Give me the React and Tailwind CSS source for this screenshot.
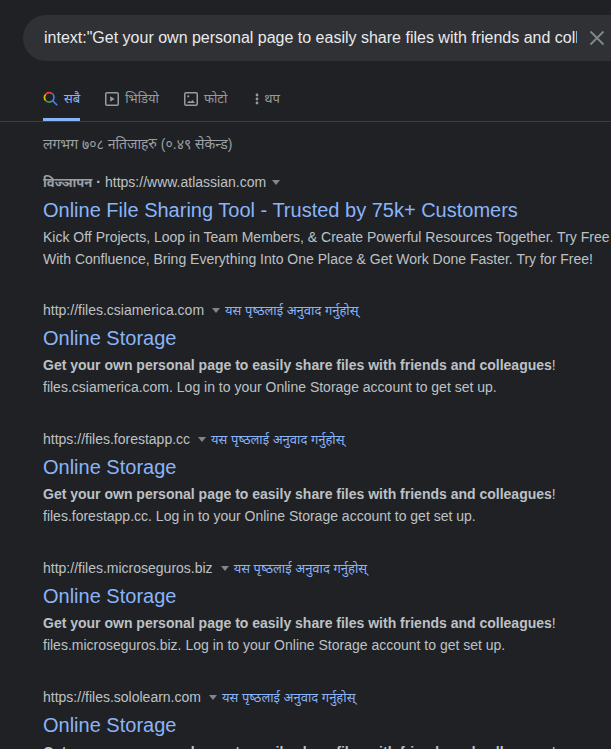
import React from "react";

const results = [
  { url: "http://files.csiamerica.com", host: "files.csiamerica.com" },
  { url: "https://files.forestapp.cc", host: "files.forestapp.cc" },
  { url: "http://files.microseguros.biz", host: "files.microseguros.biz" },
  { url: "https://files.sololearn.com", host: "files.sololearn.com" },
];

function SearchIcon() {
  return (
    <svg className="size-4" viewBox="0 0 16 16" fill="none" strokeWidth="1.6" aria-hidden="true">
      <path d="M2.6 3.4A4.8 4.8 0 0 1 9.7 3" stroke="#ea4335" />
      <path d="M2.6 3.4A4.8 4.8 0 0 0 2.6 9.4" stroke="#fbbc04" />
      <path d="M2.6 9.4A4.8 4.8 0 0 0 9.4 9.9" stroke="#34a853" />
      <path d="M9.7 3A4.8 4.8 0 0 1 9.4 9.9M9.4 9.5L14.2 14.3" stroke="#4285f4" />
    </svg>
  );
}

function VideoIcon() {
  return (
    <svg className="size-4" viewBox="0 0 16 16" fill="none" aria-hidden="true">
      <rect x="1.75" y="1.75" width="12.5" height="12.5" rx="1.2" stroke="#969ba1" strokeWidth="1.5" />
      <path d="M6.2 5.2L10.6 8L6.2 10.8Z" fill="#969ba1" />
    </svg>
  );
}

function PhotoIcon() {
  return (
    <svg className="size-4" viewBox="0 0 16 16" fill="none" aria-hidden="true">
      <rect x="1.75" y="1.75" width="12.5" height="12.5" rx="1.2" stroke="#969ba1" strokeWidth="1.5" />
      <circle cx="5.2" cy="5.3" r="1.1" fill="#969ba1" />
      <path d="M4 12L6.2 9.8L7.6 10.8L9.6 9L12 12Z" fill="#969ba1" />
    </svg>
  );
}

function MoreIcon() {
  return (
    <svg className="h-4 w-1" viewBox="0 0 4 16" fill="#969ba1" aria-hidden="true">
      <circle cx="2" cy="4" r="1.4" />
      <circle cx="2" cy="8" r="1.4" />
      <circle cx="2" cy="12" r="1.4" />
    </svg>
  );
}

function MenuArrow() {
  return (
    <button type="button" aria-label="Result options" className="flex h-5 items-center pt-px">
      <svg className="h-[5px] w-2" viewBox="0 0 8 5" fill="#80868b" aria-hidden="true">
        <path d="M0 0H8L4 5Z" />
      </svg>
    </button>
  );
}

function Result({ url, host }) {
  return (
    <article className="mb-[31px]">
      <div className="flex h-5 items-center">
        <a href={url} className="mr-2">{url}</a>
        <MenuArrow />
        <a href={url} className="ml-[5px] pt-[2px] text-[13px] text-[#8ab4f8]">यस पृष्‍ठलाई अनुवाद गर्नुहोस्</a>
      </div>
      <h3 className="mt-1 mb-[2px] text-xl leading-7 text-[#8ab4f8]">
        <a href={url}>Online Storage</a>
      </h3>
      <p className="leading-[22px]">
        <b>Get your own personal page to easily share files with friends and colleagues</b>!
        <br />
        {host}. Log in to your Online Storage account to get set up.
      </p>
    </article>
  );
}

export default function App() {
  return (
    <div className="h-screen overflow-hidden bg-[#202124] pt-[15px] font-['Liberation_Sans','Noto_Sans',sans-serif] text-sm whitespace-nowrap text-[#bdc1c6]">
      <form role="search" className="ml-[23px] flex h-[46px] items-center rounded-l-full bg-[#303134] pl-[21px]">
        <input
          type="text"
          aria-label="Search"
          defaultValue={'intext:"Get your own personal page to easily share files with friends and colleagues"'}
          className="h-[34px] min-w-0 flex-1 bg-transparent text-base text-[#e8eaed] outline-none"
        />
        <button type="button" aria-label="Clear" className="mr-[6px] ml-3">
          <svg className="size-4" viewBox="0 0 16 16" stroke="#80868b" strokeWidth="1.9" aria-hidden="true">
            <path d="M1.5 1.5L14.5 14.5M14.5 1.5L1.5 14.5" />
          </svg>
        </button>
      </form>
      <nav className="mt-4 flex h-[45px] border-b border-[#3c4043] pl-[43px] text-[13px] text-[#969ba1]">
        <a href="#all" aria-current="page" className="mr-6 flex items-center gap-[5px] border-b-3 border-[#8ab4f8] pt-[2px] text-[#8ab4f8]">
          <SearchIcon /><span className="pt-[2px]">सबै</span>
        </a>
        <a href="#videos" className="mr-6 flex items-center gap-[5px] pb-px">
          <VideoIcon /><span className="pt-[2px]">भिडियो</span>
        </a>
        <a href="#images" className="mr-6 flex items-center gap-[5px] pb-px">
          <PhotoIcon /><span className="pt-[2px]">फोटो</span>
        </a>
        <button type="button" className="ml-1 flex items-center gap-[5px] pb-px">
          <MoreIcon /><span className="pt-[2px]">थप</span>
        </button>
      </nav>
      <main className="pl-[43px]">
        <p className="mt-3 mb-[18px] h-5 leading-5 text-[#9aa0a6]">लगभग ७०८ नतिजाहरु (०.४९ सेकेन्ड)</p>
        <article className="mb-[30px]">
          <div className="flex h-5 items-center">
            <b className="pt-[2px] text-[13px] text-[#9aa0a6]">विज्‍ञापन</b>
            <b className="mx-1">·</b>
            <a href="https://www.atlassian.com" className="mr-[6px]">https://www.atlassian.com</a>
            <MenuArrow />
          </div>
          <h3 className="mt-1 mb-[2px] text-xl leading-7 text-[#8ab4f8]">
            <a href="https://www.atlassian.com">Online File Sharing Tool - Trusted by 75k+ Customers</a>
          </h3>
          <p className="leading-[22px]">
            Kick Off Projects, Loop in Team Members, &amp; Create Powerful Resources Together. Try Free
            <br />
            With Confluence, Bring Everything Into One Place &amp; Get Work Done Faster. Try for Free!
          </p>
        </article>
        {results.map((result) => (
          <Result key={result.url} {...result} />
        ))}
      </main>
    </div>
  );
}
